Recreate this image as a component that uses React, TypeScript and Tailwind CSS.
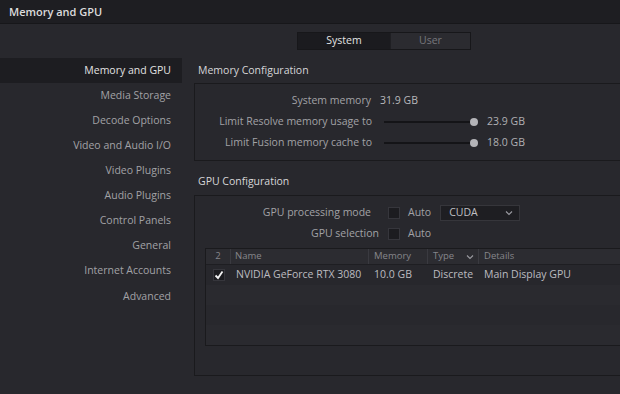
import React from 'react'

const navItems = [
  'Memory and GPU',
  'Media Storage',
  'Decode Options',
  'Video and Audio I/O',
  'Video Plugins',
  'Audio Plugins',
  'Control Panels',
  'General',
  'Internet Accounts',
  'Advanced',
]

const Slider = () => (
  <div className="relative w-[94px] h-[8px] flex items-center">
    <div className="w-[90px] h-[2px] bg-[#141417]" />
    <div className="absolute left-[86px] w-[8px] h-[8px] rounded-full bg-[#b4b4b8]" />
  </div>
)

const Checkbox = ({ checked = false }: { checked?: boolean }) => (
  <div className="w-[12px] h-[12px] bg-[#1c1c20] border border-[#36363c] flex items-center justify-center">
    {checked && (
      <svg width="10" height="10" viewBox="0 0 10 10">
        <path d="M1.5 5.5 L4 8 L8.5 1.5" stroke="#f2f2f2" strokeWidth="1.8" fill="none" />
      </svg>
    )}
  </div>
)

const Chevron = () => (
  <svg width="8" height="6" viewBox="0 0 8 6">
    <path d="M1 1.5 L4 4.5 L7 1.5" stroke="#9a9aa0" strokeWidth="1.1" fill="none" />
  </svg>
)

export default function App() {
  return (
    <div
      className="w-[620px] h-[394px] overflow-hidden bg-[#28282d] text-[10.5px] flex flex-col"
      style={{ fontFamily: '"Open Sans", "Noto Sans", sans-serif' }}
    >
      {/* title bar */}
      <div className="h-[24px] shrink-0 bg-[#1e1e22] border-b border-[#17171a] flex items-center px-[9px] pt-[1px]">
        <span className="text-[11px] font-semibold text-[#dcdcdc]">Memory and GPU</span>
      </div>

      {/* tabs */}
      <div className="h-[34px] shrink-0 flex items-center pl-[297px]">
        <div className="flex h-[18px] border border-[#17171a]">
          <div className="w-[92px] bg-[#1b1b1f] text-[#e4e4e4] flex items-center justify-center">System</div>
          <div className="w-[80px] bg-[#2b2b30] text-[#77777c] flex items-center justify-center border-l border-[#1f1f23]">User</div>
        </div>
      </div>

      <div className="flex flex-1">
        {/* sidebar */}
        <div className="w-[182px] shrink-0 flex flex-col">
          {navItems.map((item, i) => (
            <div
              key={item}
              className={`h-[25.1px] flex items-center justify-end pr-[11px] ${
                i === 0 ? 'bg-[#1d1d21] text-[#e2e2e2]' : 'text-[#a2a2a6]'
              }`}
            >
              {item}
            </div>
          ))}
        </div>

        {/* content */}
        <div className="flex-1 pl-[12px] flex flex-col">
          <div className="h-[25px] flex items-center pl-[4px] text-[#d6d6d8]">Memory Configuration</div>
          <div className="h-[78px] border border-r-0 border-[#1a1a1d] flex flex-col pt-[7px] gap-[1px]">
            <div className="h-[20px] flex items-center">
              <div className="w-[176px] text-right text-[#a2a2a6]">System memory</div>
              <div className="pl-[9px] text-[#b8b8bc]">31.9 GB</div>
            </div>
            <div className="h-[20px] flex items-center">
              <div className="w-[177px] text-right text-[#a2a2a6]">Limit Resolve memory usage to</div>
              <div className="pl-[12px]"><Slider /></div>
              <div className="pl-[9px] text-[#b0b0b4]">23.9 GB</div>
            </div>
            <div className="h-[20px] flex items-center">
              <div className="w-[177px] text-right text-[#a2a2a6]">Limit Fusion memory cache to</div>
              <div className="pl-[12px]"><Slider /></div>
              <div className="pl-[9px] text-[#b0b0b4]">18.0 GB</div>
            </div>
          </div>

          <div className="h-[34px] flex items-center pl-[4px] pt-[7px] text-[#d6d6d8]">GPU Configuration</div>
          <div className="h-[181px] border border-r-0 border-[#1a1a1d] flex flex-col pt-[8px] pl-[10px]">
            <div className="h-[18px] flex items-center">
              <div className="w-[166px] text-right text-[#a2a2a6]">GPU processing mode</div>
              <div className="pl-[17px]"><Checkbox /></div>
              <div className="pl-[8px] text-[#a2a2a6]">Auto</div>
              <div className="ml-[9px] w-[80px] h-[16px] bg-[#1e1e22] border border-[#36363b] flex items-center justify-between pl-[8px] pr-[6px] text-[#c0c0c4]">
                <span>CUDA</span>
                <Chevron />
              </div>
            </div>
            <div className="h-[18px] mt-[3px] flex items-center">
              <div className="w-[174px] text-right text-[#a2a2a6]">GPU selection</div>
              <div className="pl-[9px]"><Checkbox /></div>
              <div className="pl-[8px] text-[#a2a2a6]">Auto</div>
            </div>

            {/* table */}
            <div className="mt-[5px] h-[98px] border border-r-0 border-[#1a1a1d] bg-[#2a2a2f] flex flex-col">
              <div className="h-[16px] flex items-center text-[9.5px] text-[#86868b] border-b border-[#1e1e22] bg-[#2c2c31]">
                <div className="w-[25px] text-center border-r border-[#3a3a40]">2</div>
                <div className="w-[138px] pl-[4px] border-r border-[#3a3a40]">Name</div>
                <div className="w-[59px] pl-[5px] border-r border-[#3a3a40]">Memory</div>
                <div className="w-[51px] pl-[5px] pr-[4px] border-r border-[#3a3a40] flex items-center justify-between">
                  <span>Type</span>
                  <Chevron />
                </div>
                <div className="pl-[5px]">Details</div>
              </div>
              <div className="h-[20px] flex items-center text-[#bcbcc0] bg-[#27272c]">
                <div className="w-[25px] flex justify-center"><Checkbox checked /></div>
                <div className="w-[138px] pl-[5px]">NVIDIA GeForce RTX 3080</div>
                <div className="w-[59px] pl-[5px]">10.0 GB</div>
                <div className="w-[51px] pl-[5px]">Discrete</div>
                <div className="pl-[5px]">Main Display GPU</div>
              </div>
              <div className="h-[20px] bg-[#2a2a2f]" />
              <div className="h-[20px] bg-[#28282d]" />
              <div className="flex-1 bg-[#2a2a2f]" />
            </div>
          </div>
        </div>
      </div>
    </div>
  )
}
